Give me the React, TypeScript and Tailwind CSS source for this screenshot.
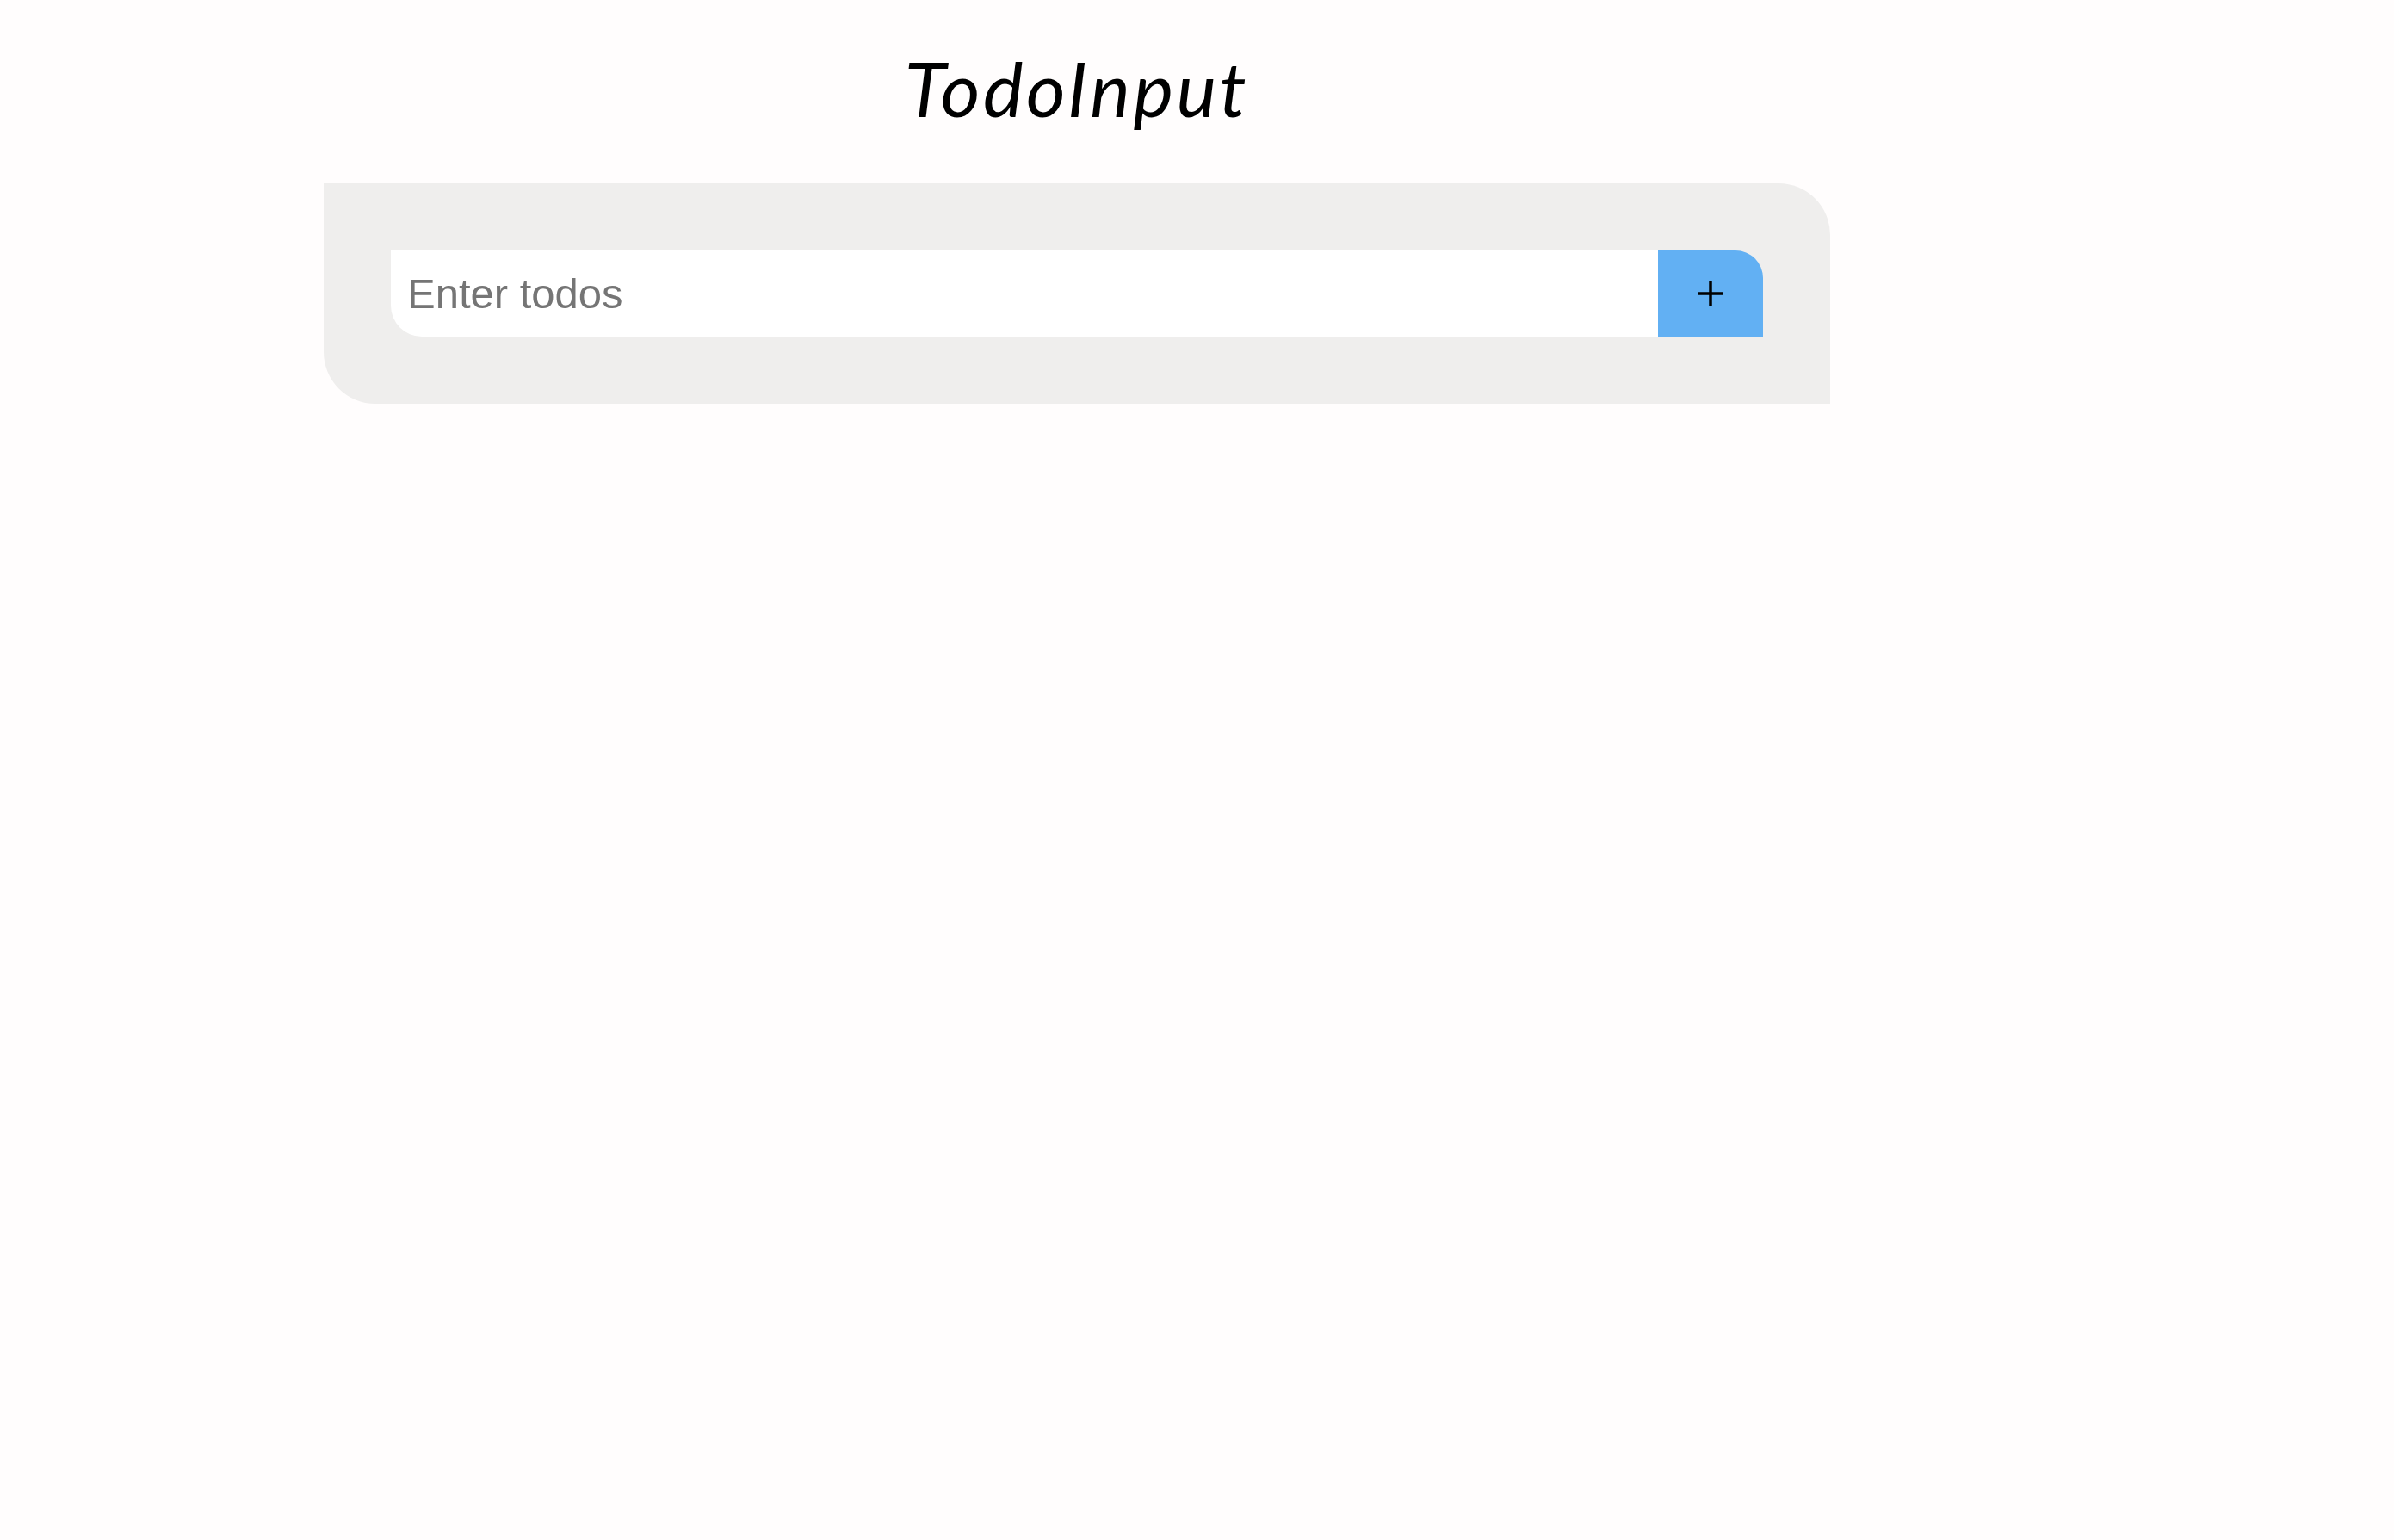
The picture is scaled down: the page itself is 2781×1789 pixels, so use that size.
export default function App() {
  return (
    <div className="min-h-screen w-full bg-[#fffdfd]">
      <div className="ml-[376px] flex w-[1750px] flex-col pt-[58px]">
        {/* Title */}
        <h1 className="text-center font-['Lato','Open_Sans',sans-serif] text-[88px] italic leading-none tracking-[3.5px] text-black">
          TodoInput
        </h1>

        {/* Input panel */}
        <div className="mt-[67px] flex rounded-tr-[60px] rounded-bl-[60px] bg-[#efeeed] p-[78px]">
          <input
            autoFocus
            type="text"
            placeholder="Enter todos"
            className="h-[100px] flex-1 rounded-bl-[36px] bg-white pl-[19px] font-['Liberation_Sans',Arial,sans-serif] text-[49px] text-black caret-black outline-none placeholder:text-[#757575]"
          />
          <button className="flex h-[100px] w-[122px] items-center justify-center rounded-tr-[32px] bg-[#62b0f3]">
            <svg width="30" height="30" viewBox="0 0 30 30">
              <path d="M15 0v30M0 15h30" stroke="#000" strokeWidth="3.5" />
            </svg>
          </button>
        </div>
      </div>
    </div>
  );
}
